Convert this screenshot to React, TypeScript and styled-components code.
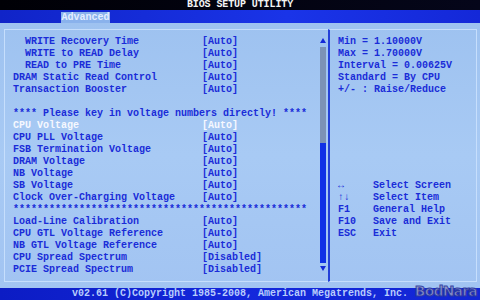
import styled, { createGlobalStyle } from "styled-components";

const GlobalStyle = createGlobalStyle`
	html, body {
		margin: 0;
		padding: 0;
		background: #000;
	}
	* {
		box-sizing: border-box;
	}
`;

const Screen = styled.div`
	position: relative;
	width: 480px;
	height: 300px;
	overflow: hidden;
	display: flex;
	flex-direction: column;
	font-family: "Liberation Mono", "DejaVu Sans Mono", monospace;
	font-size: 10px;
	font-weight: bold;
	background: #a4c6f2;
`;

const TitleBar = styled.div`
	height: 10px;
	line-height: 10px;
	background: linear-gradient(90deg, #000006, #05061a);
	color: #f4f4f4;
	text-align: center;
	letter-spacing: -0.1px;
`;

const TabBar = styled.div`
	height: 13px;
	padding: 2px 0 0 61px;
	background: linear-gradient(90deg, #1024c8, #1a34e8 60%, #1428d8);
	display: flex;
`;

const Tab = styled.div`
	width: 49px;
	height: 11px;
	line-height: 11px;
	text-align: center;
	background: #8ab2ec;
	color: #e4eeff;
`;

const Main = styled.div`
	flex: 1;
	display: flex;
	padding: 6px 3px 6px 4px;
	background: linear-gradient(180deg, #9ec2f0, #a8caf4 50%, #a2c4f2);
`;

const LeftFrame = styled.div`
	width: 324px;
	display: flex;
	border: 1px solid #c6defc;
	border-right: none;
`;

const List = styled.div`
	flex: 1;
	padding: 6px 0 0 8px;
	color: #1a2cd8;
`;

const Row = styled.div<{ $selected?: boolean }>`
	display: grid;
	grid-template-columns: 189px auto;
	height: 12px;
	line-height: 12px;
	white-space: pre;
	color: ${(p) => (p.$selected ? "#f6f8ff" : "inherit")};
`;

const Label = styled.span<{ $indent?: boolean }>`
	padding-left: ${(p) => (p.$indent ? "12px" : "0")};
`;

const Line = styled.div`
	height: 12px;
	line-height: 12px;
	white-space: pre;
`;

const ScrollBar = styled.div`
	width: 6px;
	margin: 8px 2px 0 0;
	display: flex;
	flex-direction: column;
	align-items: center;
`;

const Arrow = styled.div<{ $down?: boolean }>`
	width: 0;
	height: 0;
	border-left: 3px solid transparent;
	border-right: 3px solid transparent;
	${(p) =>
		p.$down
			? "border-top: 5px solid #1428d8; margin-top: 3px;"
			: "border-bottom: 5px solid #1428d8; margin-bottom: 4px;"}
`;

const Track = styled.div`
	width: 6px;
	height: 96px;
	background: #7c92b6;
`;

const Thumb = styled.div`
	width: 6px;
	height: 120px;
	background: #1030e6;
`;

const RightPanel = styled.div`
	flex: 1;
	border: 1px solid #c6defc;
	border-left: 2px solid #2440d8;
	padding: 6px 0 0 8px;
	color: #1a2cd8;
`;

const HelpList = styled.div`
	margin-top: 84px;
`;

const HelpRow = styled.div`
	display: grid;
	grid-template-columns: 35px auto;
	height: 12px;
	line-height: 12px;
	white-space: pre;
`;

const Footer = styled.div`
	height: 12px;
	line-height: 12px;
	background: linear-gradient(90deg, #0c1cc4, #1428dc 50%, #1226d4);
	color: #b8cdfc;
	text-align: center;
	white-space: pre;
`;

const Watermark = styled.div`
	position: absolute;
	right: 3px;
	bottom: 2px;
	font-family: "DejaVu Sans", "Liberation Sans", sans-serif;
	font-size: 14px;
	font-weight: bold;
	letter-spacing: -0.8px;
	line-height: 14px;
	color: #8e94c4;
	-webkit-text-stroke: 1px #2e3a9c;
	opacity: 0.9;
`;

type Item =
	| { kind: "item"; label: string; value: string; indent?: boolean; selected?: boolean }
	| { kind: "line"; text: string };

const items: Item[] = [
	{ kind: "item", label: "WRITE Recovery Time", value: "[Auto]", indent: true },
	{ kind: "item", label: "WRITE to READ Delay", value: "[Auto]", indent: true },
	{ kind: "item", label: "READ to PRE Time", value: "[Auto]", indent: true },
	{ kind: "item", label: "DRAM Static Read Control", value: "[Auto]" },
	{ kind: "item", label: "Transaction Booster", value: "[Auto]" },
	{ kind: "line", text: "" },
	{ kind: "line", text: "**** Please key in voltage numbers directly! ****" },
	{ kind: "item", label: "CPU Voltage", value: "[Auto]", selected: true },
	{ kind: "item", label: "CPU PLL Voltage", value: "[Auto]" },
	{ kind: "item", label: "FSB Termination Voltage", value: "[Auto]" },
	{ kind: "item", label: "DRAM Voltage", value: "[Auto]" },
	{ kind: "item", label: "NB Voltage", value: "[Auto]" },
	{ kind: "item", label: "SB Voltage", value: "[Auto]" },
	{ kind: "item", label: "Clock Over-Charging Voltage", value: "[Auto]" },
	{ kind: "line", text: "*".repeat(49) },
	{ kind: "item", label: "Load-Line Calibration", value: "[Auto]" },
	{ kind: "item", label: "CPU GTL Voltage Reference", value: "[Auto]" },
	{ kind: "item", label: "NB GTL Voltage Reference", value: "[Auto]" },
	{ kind: "item", label: "CPU Spread Spectrum", value: "[Disabled]" },
	{ kind: "item", label: "PCIE Spread Spectrum", value: "[Disabled]" },
];

const info = [
	"Min = 1.10000V",
	"Max = 1.70000V",
	"Interval = 0.00625V",
	"Standard = By CPU",
	"+/- : Raise/Reduce",
];

const help = [
	["\u2194", "Select Screen"],
	["\u2191\u2193", "Select Item"],
	["F1", "General Help"],
	["F10", "Save and Exit"],
	["ESC", "Exit"],
];

export default function App() {
	return (
		<>
			<GlobalStyle />
			<Screen>
				<TitleBar>BIOS SETUP UTILITY</TitleBar>
				<TabBar>
					<Tab>Advanced</Tab>
				</TabBar>
				<Main>
					<LeftFrame>
						<List>
							{items.map((item, i) =>
								item.kind === "line" ? (
									<Line key={i}>{item.text}</Line>
								) : (
									<Row key={i} $selected={item.selected}>
										<Label $indent={item.indent}>{item.label}</Label>
										<span>{item.value}</span>
									</Row>
								)
							)}
						</List>
						<ScrollBar>
							<Arrow />
							<Track />
							<Thumb />
							<Arrow $down />
						</ScrollBar>
					</LeftFrame>
					<RightPanel>
						{info.map((t) => (
							<Line key={t}>{t}</Line>
						))}
						<HelpList>
							{help.map(([k, d]) => (
								<HelpRow key={d}>
									<span>{k}</span>
									<span>{d}</span>
								</HelpRow>
							))}
						</HelpList>
					</RightPanel>
				</Main>
				<Footer>v02.61 (C)Copyright 1985-2008, American Megatrends, Inc.</Footer>
				<Watermark>BodNara</Watermark>
			</Screen>
		</>
	);
}
